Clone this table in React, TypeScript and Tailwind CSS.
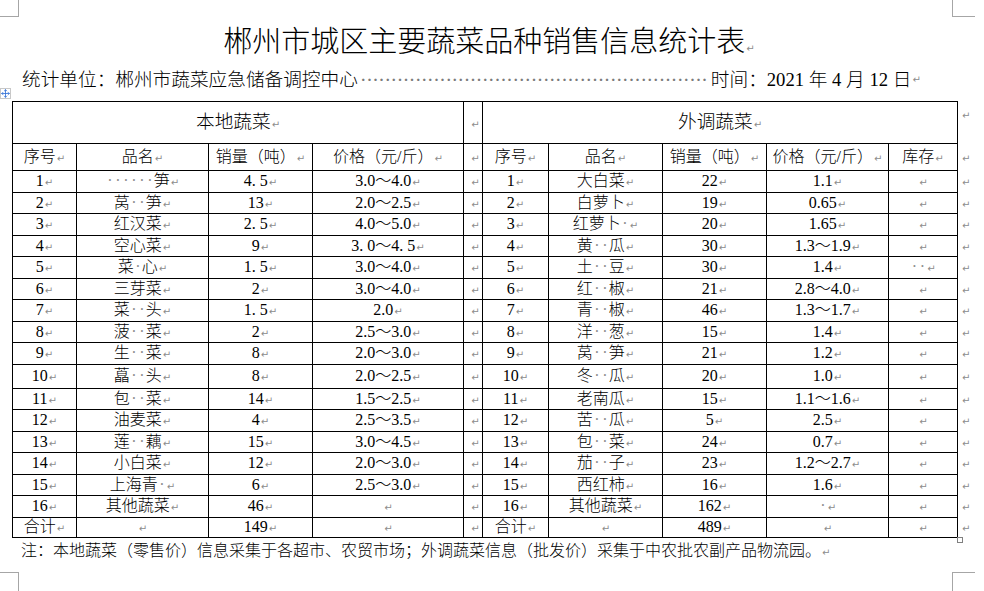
import { Move } from "lucide-react";

type Row = {
  no: string;
  name: string;
  qty: string;
  price: string;
  stock?: string;
  monoQty?: boolean;
  monoPrice?: boolean;
  tall?: boolean;
};

const LOCAL: Row[] = [
  { no: "1", name: "······笋", qty: "4.5", price: "3.0～4.0", monoQty: true },
  { no: "2", name: "莴··笋", qty: "13", price: "2.0～2.5", monoQty: true },
  { no: "3", name: "红汉菜", qty: "2.5", price: "4.0～5.0", monoQty: true },
  { no: "4", name: "空心菜", qty: "9", price: "3.0～4.5", monoQty: true, monoPrice: true },
  { no: "5", name: "菜·心", qty: "1.5", price: "3.0～4.0", monoQty: true },
  { no: "6", name: "三芽菜", qty: "2", price: "3.0～4.0", monoQty: true },
  { no: "7", name: "菜··头", qty: "1.5", price: "2.0", monoQty: true },
  { no: "8", name: "菠··菜", qty: "2", price: "2.5～3.0", monoQty: true },
  { no: "9", name: "生··菜", qty: "8", price: "2.0～3.0", monoQty: true },
  { no: "10", name: "藠··头", qty: "8", price: "2.0～2.5", monoQty: true, tall: true },
  { no: "11", name: "包··菜", qty: "14", price: "1.5～2.5", monoQty: true },
  { no: "12", name: "油麦菜", qty: "4", price: "2.5～3.5", monoQty: true },
  { no: "13", name: "莲··藕", qty: "15", price: "3.0～4.5", monoQty: true },
  { no: "14", name: "小白菜", qty: "12", price: "2.0～3.0" },
  { no: "15", name: "上海青·", qty: "6", price: "2.5～3.0", monoQty: true },
  { no: "16", name: "其他蔬菜", qty: "46", price: "", monoQty: true },
];

const IMPORTED: Row[] = [
  { no: "1", name: "大白菜", qty: "22", price: "1.1" },
  { no: "2", name: "白萝卜", qty: "19", price: "0.65" },
  { no: "3", name: "红萝卜·", qty: "20", price: "1.65" },
  { no: "4", name: "黄··瓜", qty: "30", price: "1.3～1.9" },
  { no: "5", name: "土··豆", qty: "30", price: "1.4", stock: "··" },
  { no: "6", name: "红··椒", qty: "21", price: "2.8～4.0" },
  { no: "7", name: "青··椒", qty: "46", price: "1.3～1.7" },
  { no: "8", name: "洋··葱", qty: "15", price: "1.4" },
  { no: "9", name: "莴··笋", qty: "21", price: "1.2" },
  { no: "10", name: "冬··瓜", qty: "20", price: "1.0" },
  { no: "11", name: "老南瓜", qty: "15", price: "1.1～1.6" },
  { no: "12", name: "苦··瓜", qty: "5", price: "2.5" },
  { no: "13", name: "包··菜", qty: "24", price: "0.7" },
  { no: "14", name: "茄··子", qty: "23", price: "1.2～2.7" },
  { no: "15", name: "西红柿", qty: "16", price: "1.6" },
  { no: "16", name: "其他蔬菜", qty: "162", price: "·" },
];

function Ret() {
  return (
    <span className="ml-[1px] font-['DejaVu_Sans',sans-serif] text-[10px] font-normal leading-none text-[#8c8c8c]">
      ↵
    </span>
  );
}

// spaces shown by Word as grey dots
function Txt({ s }: { s: string }) {
  return (
    <>
      {s.split("").map((ch, i) =>
        ch === "·" ? (
          <span key={i} className="inline-block w-[8px] text-center text-[#8c8c8c]">
            ·
          </span>
        ) : (
          <span key={i}>{ch}</span>
        )
      )}
    </>
  );
}

// 宋体-style numbers: the full stop takes a whole half-width cell
function Song({ s }: { s: string }) {
  return (
    <>
      {s.split("").map((ch, i) =>
        ch === "." ? (
          <span key={i} className="inline-block w-[8px] text-left">
            .
          </span>
        ) : (
          <span key={i}>{ch}</span>
        )
      )}
    </>
  );
}

function Cell({
  children,
  colSpan,
  className = "",
}: {
  children?: React.ReactNode;
  colSpan?: number;
  className?: string;
}) {
  return (
    <td colSpan={colSpan} className={`border border-black p-0 text-center whitespace-nowrap ${className}`}>
      {children}
      <Ret />
    </td>
  );
}

function Edge({ top }: { top?: boolean }) {
  return (
    <td className={`p-0 pl-[3px] text-left ${top ? "align-top pt-[4px]" : ""}`}>
      <Ret />
    </td>
  );
}

export default function App() {
  const dots = Array.from({ length: 57 });
  return (
    <div className="relative h-[591px] w-[984px] overflow-hidden bg-white font-['Liberation_Serif','Noto_Sans_CJK_SC',serif] font-light text-black">
      {/* page corner marks */}
      <div className="absolute left-0 top-0 h-[17px] w-[19px] border-b border-r border-[#a6a6a6]" />
      <div className="absolute left-[952px] top-0 h-[17px] w-[23px] border-b border-l border-[#a6a6a6]" />
      <div className="absolute left-0 top-[572px] h-[19px] w-[19px] border-r border-t border-[#a6a6a6]" />
      <div className="absolute left-[952px] top-[572px] h-[19px] w-[23px] border-l border-t border-[#a6a6a6]" />

      {/* table move / resize handles */}
      <div className="absolute left-0 top-[88px] flex h-[11px] w-[11px] items-center justify-center border border-[#c8c8c8] bg-white">
        <Move size={9} strokeWidth={2.2} className="text-[#2f6fd6]" />
      </div>
      <div className="absolute left-[957px] top-[537px] h-[6px] w-[6px] border border-[#808080] bg-white" />

      <h1 className="pr-[6px] pt-[25px] text-center text-[29px] font-light leading-[35px]">
        郴州市城区主要蔬菜品种销售信息统计表
        <Ret />
      </h1>

      <div className="mt-[8px] flex h-[24px] items-center pl-[22px] text-[18.67px] leading-none">
        <span>统计单位：郴州市蔬菜应急储备调控中心</span>
        <span className="ml-[3px] flex w-[347px] justify-between text-[15px] font-bold text-[#7a7a7a]">
          {dots.map((_, i) => (
            <span key={i}>·</span>
          ))}
        </span>
        <span className="ml-[3px]">时间：2021 年 4 月 12 日</span>
        <Ret />
      </div>

      <table className="ml-[12px] mt-[9px] w-[965px] table-fixed border-collapse text-[16px] leading-none">
        <colgroup>
          <col className="w-[64px]" />
          <col className="w-[132px]" />
          <col className="w-[104px]" />
          <col className="w-[151px]" />
          <col className="w-[19px]" />
          <col className="w-[66px]" />
          <col className="w-[114px]" />
          <col className="w-[104px]" />
          <col className="w-[122px]" />
          <col className="w-[69px]" />
          <col className="w-[20px]" />
        </colgroup>
        <tbody>
          <tr className="h-[42px]">
            <Cell colSpan={4} className="text-[18.67px]">
              本地蔬菜
            </Cell>
            <Cell className="pl-[4px]" />
            <Cell colSpan={5} className="text-[18.67px]">
              外调蔬菜
            </Cell>
            <Edge top />
          </tr>
          <tr className="h-[27px]">
            <Cell>序号</Cell>
            <Cell>品名</Cell>
            <Cell>销量（吨）</Cell>
            <Cell>价格（元/斤）</Cell>
            <Cell className="pl-[4px]" />
            <Cell>序号</Cell>
            <Cell>品名</Cell>
            <Cell>销量（吨）</Cell>
            <Cell>价格（元/斤）</Cell>
            <Cell>库存</Cell>
            <Edge />
          </tr>
          {LOCAL.map((l, i) => {
            const r = IMPORTED[i];
            return (
              <tr key={l.no} className={l.tall ? "h-[24px]" : "h-[21.5px]"}>
                <Cell>{l.no}</Cell>
                <Cell>
                  <Txt s={l.name} />
                </Cell>
                <Cell>{l.monoQty ? <Song s={l.qty} /> : l.qty}</Cell>
                <Cell>{l.monoPrice ? <Song s={l.price} /> : l.price}</Cell>
                <Cell className="pl-[4px]" />
                <Cell>{r.no}</Cell>
                <Cell>
                  <Txt s={r.name} />
                </Cell>
                <Cell>{r.qty}</Cell>
                <Cell>
                  <Txt s={r.price} />
                </Cell>
                <Cell>{r.stock ? <Txt s={r.stock} /> : null}</Cell>
                <Edge />
              </tr>
            );
          })}
          <tr className="h-[20.5px]">
            <Cell>合计</Cell>
            <Cell />
            <Cell>149</Cell>
            <Cell />
            <Cell className="pl-[4px]" />
            <Cell>合计</Cell>
            <Cell />
            <Cell>489</Cell>
            <Cell />
            <Cell />
            <Edge />
          </tr>
        </tbody>
      </table>

      <p className="mt-[2px] pl-[21px] text-[16px] leading-[22px]">
        注：本地蔬菜（零售价）信息采集于各超市、农贸市场；外调蔬菜信息（批发价）采集于中农批农副产品物流园。
        <Ret />
      </p>
    </div>
  );
}
